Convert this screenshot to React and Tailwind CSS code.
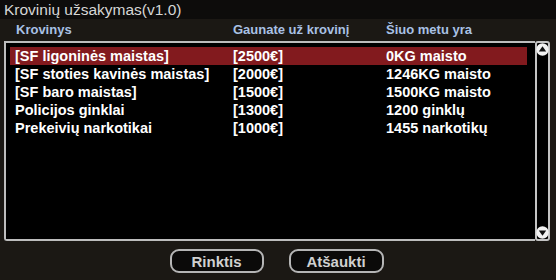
import React from 'react';

const rows = [
  { name: '[SF ligoninės maistas]', price: '[2500€]', stock: '0KG maisto' },
  { name: '[SF stoties kavinės maistas]', price: '[2000€]', stock: '1246KG maisto' },
  { name: '[SF baro maistas]', price: '[1500€]', stock: '1500KG maisto' },
  { name: 'Policijos ginklai', price: '[1300€]', stock: '1200 ginklų' },
  { name: 'Prekeivių narkotikai', price: '[1000€]', stock: '1455 narkotikų' },
];

function Arrow({ down }) {
  return (
    <svg width="13" height="13" viewBox="0 0 13 13">
      <circle cx="6.5" cy="6.5" r="6.2" fill="#f2f2f2" />
      {down ? (
        <polygon points="2.8,4.5 10.2,4.5 6.5,9.8" fill="#111" />
      ) : (
        <polygon points="2.8,8.5 10.2,8.5 6.5,3.2" fill="#111" />
      )}
    </svg>
  );
}

export default function App() {
  const selected = 0;

  return (
    <div className="w-[556px] h-[280px] bg-[#1b1814] overflow-hidden font-['Liberation_Sans',Arial,sans-serif]">
      <div className="h-[19px] bg-[#0d0c0b] pl-[4px] text-[15.5px] leading-[19px] text-[#d6d6d6]">
        Krovinių užsakymas(v1.0)
      </div>

      <div className="h-[22px] flex items-center pl-[16px] text-[13px] font-bold text-[#a9c1e4]">
        <div className="w-[217px]">Krovinys</div>
        <div className="w-[153px]">Gaunate už krovinį</div>
        <div>Šiuo metu yra</div>
      </div>

      <div className="flex ml-[4px] h-[200px]">
        <div className="w-[531px] h-full bg-black border-2 border-r-0 border-[#bdbdbd] rounded-bl-[3px] pt-[4px] pl-[4px] pr-[8px]">
          {rows.map((r, i) => (
            <div
              key={r.name}
              className={`h-[18px] flex items-center pl-[5px] text-[14.5px] font-bold text-white leading-[18px] ${i === selected ? 'bg-[#821a1e]' : ''}`}
            >
              <div className="w-[218px] whitespace-nowrap">{r.name}</div>
              <div className="w-[153px] whitespace-nowrap">{r.price}</div>
              <div className="whitespace-nowrap">{r.stock}</div>
            </div>
          ))}
        </div>
        <div className="w-[15px] h-full bg-black border-2 border-[#c4c4c4] rounded-[3px] flex flex-col justify-between items-center">
          <Arrow />
          <Arrow down />
        </div>
      </div>

      <div className="flex justify-center gap-[25px] mt-[8px] pr-[3px]">
        <button className="w-[94px] h-[24px] rounded-[9px] border-2 border-[#b5b5b5] bg-[#0b0a09] text-[15px] font-bold text-[#d0d0d0] leading-none">
          Rinktis
        </button>
        <button className="w-[95px] h-[24px] rounded-[9px] border-2 border-[#b5b5b5] bg-[#0b0a09] text-[15px] font-bold text-[#d0d0d0] leading-none">
          Atšaukti
        </button>
      </div>
    </div>
  );
}
